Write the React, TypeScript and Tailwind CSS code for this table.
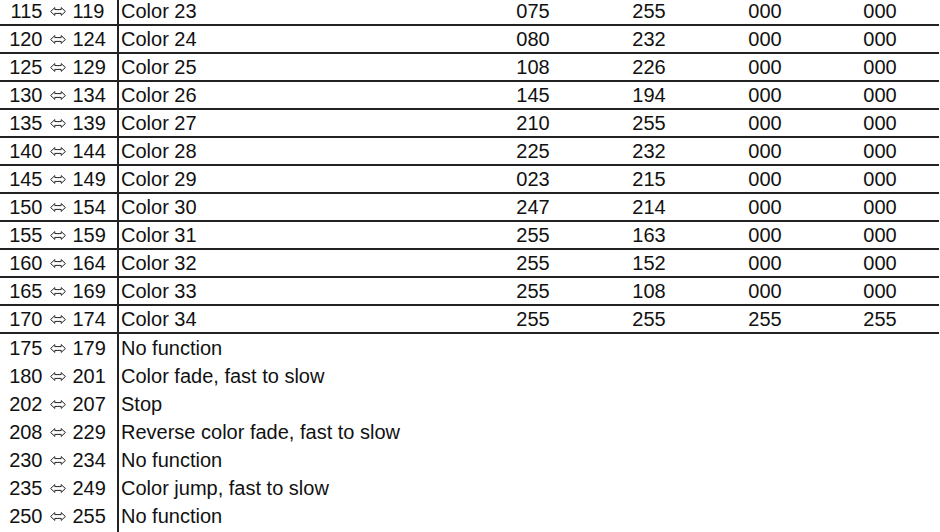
const COLORS: [string, string, string, string, string, string][] = [
  ['115', '119', 'Color 23', '075', '255', '000'],
  ['120', '124', 'Color 24', '080', '232', '000'],
  ['125', '129', 'Color 25', '108', '226', '000'],
  ['130', '134', 'Color 26', '145', '194', '000'],
  ['135', '139', 'Color 27', '210', '255', '000'],
  ['140', '144', 'Color 28', '225', '232', '000'],
  ['145', '149', 'Color 29', '023', '215', '000'],
  ['150', '154', 'Color 30', '247', '214', '000'],
  ['155', '159', 'Color 31', '255', '163', '000'],
  ['160', '164', 'Color 32', '255', '152', '000'],
  ['165', '169', 'Color 33', '255', '108', '000'],
  ['170', '174', 'Color 34', '255', '255', '255'],
]

const EFFECTS: [string, string, string][] = [
  ['175', '179', 'No function'],
  ['180', '201', 'Color fade, fast to slow'],
  ['202', '207', 'Stop'],
  ['208', '229', 'Reverse color fade, fast to slow'],
  ['230', '234', 'No function'],
  ['235', '249', 'Color jump, fast to slow'],
  ['250', '255', 'No function'],
]

function Arrow() {
  return (
    <svg width="16" height="9" viewBox="0 0 16 9" className="shrink-0">
      <path
        d="M0.6 4.5 L4.8 0.6 V2.6 H11.2 V0.6 L15.4 4.5 L11.2 8.4 V6.4 H4.8 V8.4 Z"
        fill="none"
        stroke="#222"
        strokeWidth="1"
      />
    </svg>
  )
}

function Range({ from, to }: { from: string; to: string }) {
  return (
    <div className="w-[119px] shrink-0 flex items-center justify-center gap-[7px] pr-[2px] border-r-2 border-[#222] h-full">
      <span>{from}</span>
      <Arrow />
      <span>{to}</span>
    </div>
  )
}

export default function App() {
  return (
    <div
      className="w-[940px] h-[532px] overflow-hidden bg-white text-[#111] text-[20px] leading-[26px]"
      style={{ fontFamily: '"Liberation Sans", Arial, sans-serif' }}
    >
      <div className="mt-[-2px] w-[939px]">
        {/* colour rows with rules */}
        {COLORS.map(([from, to, name, r, g, b]) => {
          const w = name === 'Color 34' ? '255' : '000'
          return (
            <div key={from} className="flex h-[28px] border-b-2 border-[#222]">
              <Range from={from} to={to} />
              <div className="w-[356px] shrink-0 pl-[2px] flex items-center">{name}</div>
              <div className="w-[116px] shrink-0 flex items-center justify-center">{r}</div>
              <div className="w-[116px] shrink-0 flex items-center justify-center">{g}</div>
              <div className="w-[116px] shrink-0 flex items-center justify-center">{b}</div>
              <div className="w-[114px] shrink-0 flex items-center justify-center">{w}</div>
            </div>
          )
        })}

        {/* effect rows, no rules */}
        {EFFECTS.map(([from, to, text]) => (
          <div key={from + text} className="flex h-[28px]">
            <Range from={from} to={to} />
            <div className="pl-[2px] flex items-center">{text}</div>
          </div>
        ))}
        <div className="flex h-[6px]">
          <div className="w-[119px] border-r-2 border-[#222]" />
        </div>
      </div>
    </div>
  )
}
